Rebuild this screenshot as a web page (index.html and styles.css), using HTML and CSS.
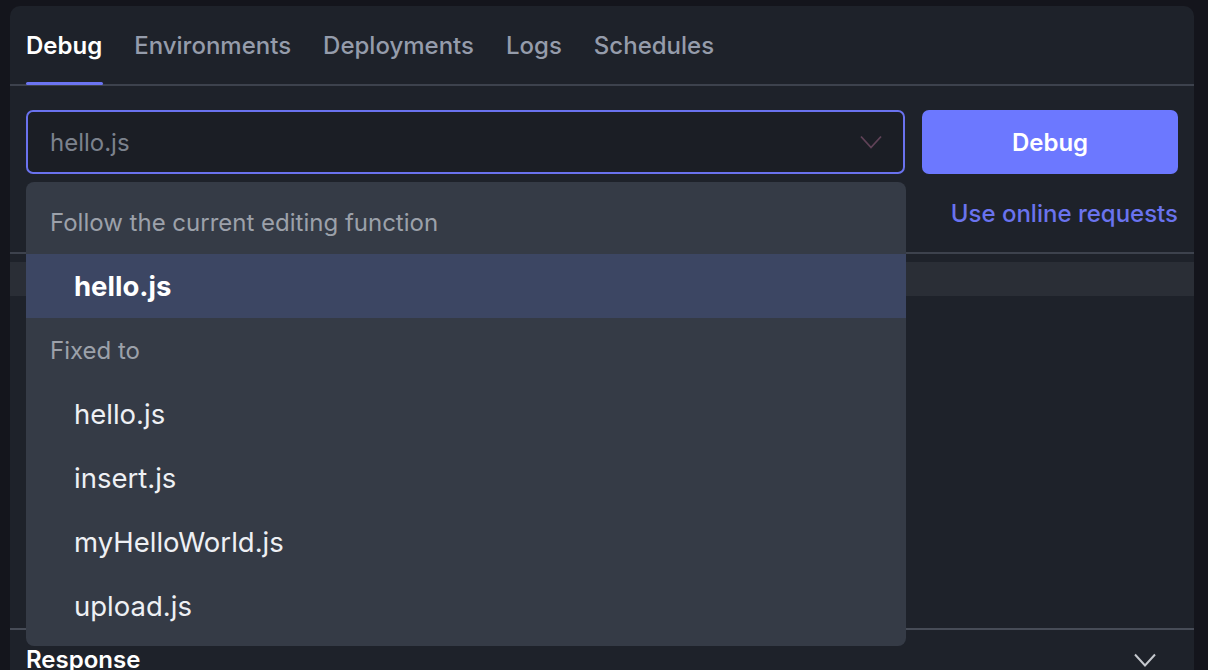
FILE: index.html
```html
<!DOCTYPE html>
<html lang="en">
<head>
<meta charset="utf-8">
<title>Debug</title>
<link rel="stylesheet" href="styles.css">
</head>
<body>
<div class="panel">
  <nav class="tabs">
    <div class="tab active">Debug</div>
    <div class="tab">Environments</div>
    <div class="tab">Deployments</div>
    <div class="tab">Logs</div>
    <div class="tab">Schedules</div>
  </nav>
  <div class="controls">
    <div class="select">
      <span class="select-value">hello.js</span>
      <svg class="select-chevron" width="22" height="14" viewBox="0 0 22 14"><polyline points="1,1.5 11,12.5 21,1.5" fill="none" stroke="#5f4257" stroke-width="1.8"/></svg>
    </div>
    <button class="btn-debug">Debug</button>
  </div>
  <div class="link-row"><a class="link">Use online requests</a></div>
  <div class="divider"></div>
  <div class="band"></div>
  <div class="body-space"></div>
  <div class="divider light"></div>
  <div class="response">
    <span class="response-title">Response</span>
    <svg width="22" height="14" viewBox="0 0 22 14"><polyline points="1,1.5 11,12.5 21,1.5" fill="none" stroke="#c5c8ce" stroke-width="2"/></svg>
  </div>

  <div class="dropdown">
    <div class="group-label">Follow the current editing function</div>
    <div class="option selected">hello.js</div>
    <div class="group-label">Fixed to</div>
    <div class="option">hello.js</div>
    <div class="option">insert.js</div>
    <div class="option">myHelloWorld.js</div>
    <div class="option">upload.js</div>
  </div>
</div>
</body>
</html>
```
FILE: styles.css
```css
* { box-sizing: border-box; }
html, body { margin: 0; padding: 0; }
body {
  background: #14151c;
  font-family: Inter, "Noto Sans", sans-serif;
  font-size: 24px;
  overflow: hidden;
  height: 670px;
}
.panel {
  position: relative;
  margin: 6px 14px 0 10px;
  height: 664px;
  background: #1e222a;
  border-radius: 10px 10px 0 0;
  overflow: hidden;
}
.tabs {
  display: flex;
  gap: 32px;
  padding: 0 16px;
  height: 80px;
  border-bottom: 2px solid #3d424d;
}
.tab {
  position: relative;
  line-height: 80px;
  font-weight: 500;
  color: #959cab;
}
.tab.active {
  color: #ffffff;
  font-weight: 600;
}
.tab.active::after {
  content: "";
  position: absolute;
  left: 0;
  right: -1px;
  bottom: -1px;
  height: 3px;
  border-radius: 2px;
  background: #6b74f2;
}
.controls {
  display: flex;
  gap: 17px;
  padding: 0 16px;
  margin-top: 24px;
  height: 64px;
}
.select {
  flex: 1;
  display: flex;
  align-items: center;
  justify-content: space-between;
  border: 2px solid #6a72ee;
  border-radius: 7px;
  background: #1b1e25;
  padding: 0 21px 0 22px;
}
.select-value {
  color: #7c828d;
}
.btn-debug {
  width: 256px;
  border: none;
  border-radius: 7px;
  background: #6c78ff;
  color: #ffffff;
  font-family: inherit;
  font-size: 24px;
  font-weight: 600;
}
.link-row {
  height: 78px;
  display: flex;
  align-items: center;
  justify-content: flex-end;
  padding: 0 16px;
}
.link {
  color: #6a73ee;
  font-weight: 500;
}
.divider {
  height: 2px;
  background: #3d424d;
}
.divider.light {
  background: #474c57;
}
.band {
  margin-top: 8px;
  height: 34px;
  background: #2a2e36;
}
.body-space {
  height: 332px;
}
.response {
  display: flex;
  align-items: center;
  justify-content: space-between;
  padding: 15px 38px 0 16px;
}
.response-title {
  color: #ffffff;
  font-weight: 600;
}
.dropdown {
  position: absolute;
  left: 16px;
  top: 176px;
  width: 880px;
  padding: 8px 0;
  background: #353b46;
  border-radius: 8px;
}
.group-label {
  height: 64px;
  display: flex;
  align-items: center;
  padding-left: 24px;
  color: #9ca1aa;
}
.option {
  height: 64px;
  display: flex;
  align-items: center;
  padding-left: 48px;
  font-size: 27.5px;
  color: #eef0f4;
}
.option.selected {
  background: #3c4663;
  color: #ffffff;
  font-weight: 700;
}
```
